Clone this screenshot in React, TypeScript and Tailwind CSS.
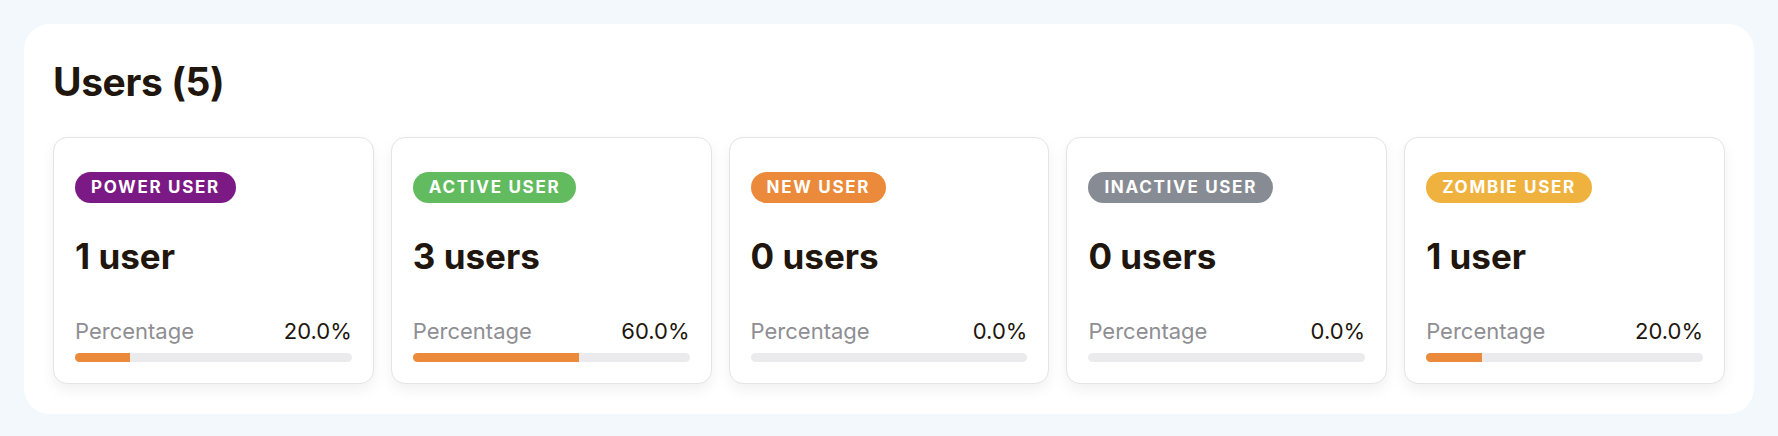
import React from 'react';

type Segment = {
  label: string;
  count: number;
  badge: string;
};

const segments: Segment[] = [
  { label: 'Power User', count: 1, badge: 'bg-[#7b1a84]' },
  { label: 'Active User', count: 3, badge: 'bg-[#62bb5f]' },
  { label: 'New User', count: 0, badge: 'bg-[#ea8a3a]' },
  { label: 'Inactive User', count: 0, badge: 'bg-[#878b93]' },
  { label: 'Zombie User', count: 1, badge: 'bg-[#f0b23e]' },
];

const total = segments.reduce((sum, s) => sum + s.count, 0);

function SegmentCard({ segment }: { segment: Segment }) {
  const pct = total ? (segment.count / total) * 100 : 0;
  return (
    <div className="flex flex-col bg-white rounded-[14px] border border-[#e4e4e7] shadow-[0_6px_14px_rgba(0,0,0,0.06)] pt-[34px] px-[21px] pb-[21px]">
      <div className="flex">
        <span
          className={`${segment.badge} text-white uppercase font-bold text-[17px] tracking-[0.1em] leading-[31px] h-[31px] px-[16px] rounded-full`}
        >
          {segment.label}
        </span>
      </div>
      <div className="mt-[33px] text-[35px] font-bold leading-[40px] text-[#21160d]">
        {segment.count} {segment.count === 1 ? 'user' : 'users'}
      </div>
      <div className="mt-[41px] flex justify-between items-center text-[22px] leading-[28px]">
        <span className="text-[#8e8e93]">Percentage</span>
        <span className="text-[#21160d]">{pct.toFixed(1)}%</span>
      </div>
      <div className="mt-[8px] h-[9px] rounded-full bg-[#ebebee] overflow-hidden">
        <div className="h-full bg-[#ea8a3a]" style={{ width: `${pct}%` }} />
      </div>
    </div>
  );
}

export default function App() {
  return (
    <div className="min-h-screen bg-[#f3f8fd] p-[24px] font-['Inter',sans-serif]">
      <div className="bg-white rounded-[26px] px-[29px] pt-[36px] pb-[30px]">
        <h1 className="text-[39px] font-bold leading-[44px] tracking-[-0.01em] text-[#21160d]">
          Users ({total})
        </h1>
        <div className="mt-[33px] grid grid-cols-5 gap-[17px]">
          {segments.map((s) => (
            <SegmentCard key={s.label} segment={s} />
          ))}
        </div>
      </div>
    </div>
  );
}
